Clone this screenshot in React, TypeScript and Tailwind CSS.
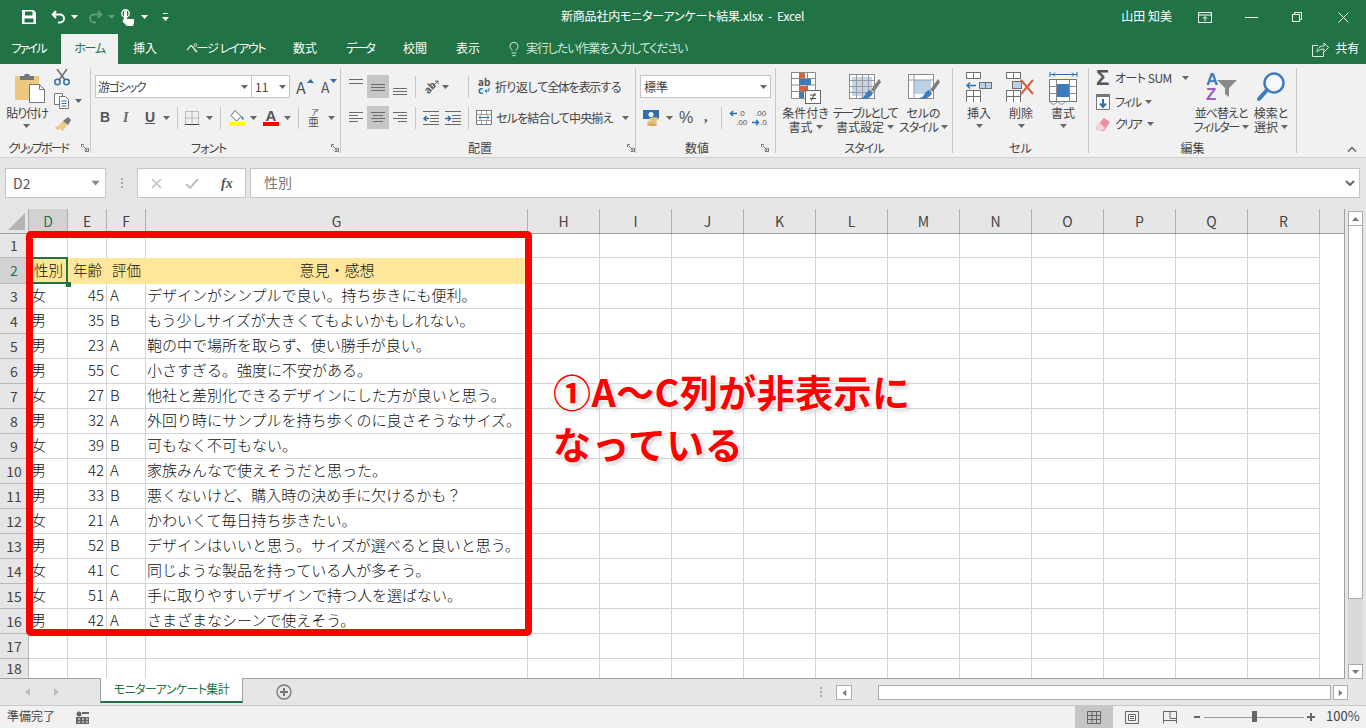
import React from 'react';
import { Lightbulb } from 'lucide-react';

type SheetRow = [string, number, string, string];

const sheetRows: SheetRow[] = [
  ['女', 45, 'A', 'デザインがシンプルで良い。持ち歩きにも便利。'],
  ['男', 35, 'B', 'もう少しサイズが大きくてもよいかもしれない。'],
  ['男', 23, 'A', '鞄の中で場所を取らず、使い勝手が良い。'],
  ['男', 55, 'C', '小さすぎる。強度に不安がある。'],
  ['女', 27, 'B', '他社と差別化できるデザインにした方が良いと思う。'],
  ['男', 32, 'A', '外回り時にサンプルを持ち歩くのに良さそうなサイズ。'],
  ['女', 39, 'B', '可もなく不可もない。'],
  ['男', 42, 'A', '家族みんなで使えそうだと思った。'],
  ['男', 33, 'B', '悪くないけど、購入時の決め手に欠けるかも？'],
  ['女', 21, 'A', 'かわいくて毎日持ち歩きたい。'],
  ['男', 52, 'B', 'デザインはいいと思う。サイズが選べると良いと思う。'],
  ['女', 41, 'C', '同じような製品を持っている人が多そう。'],
  ['女', 51, 'A', '手に取りやすいデザインで持つ人を選ばない。'],
  ['男', 42, 'A', 'さまざまなシーンで使えそう。'],
];

const emptyCols = ['H', 'I', 'J', 'K', 'L', 'M', 'N', 'O', 'P', 'Q', 'R'];
const gridLine = 'border-r border-b border-[#d4d4d4]';

const Caret = ({ className = '', color = '#666' }: { className?: string; color?: string }) => (
  <svg width="7" height="4" viewBox="0 0 7 4" className={`shrink-0 ${className}`}>
    <path d="M0 0h7L3.5 4z" fill={color} />
  </svg>
);

const Launcher = ({ className = '' }: { className?: string }) => (
  <svg width="8" height="8" viewBox="0 0 8 8" className={`shrink-0 ${className}`} fill="none" stroke="#777">
    <path d="M.5 3V.5H3M7.5 4v3.5H4M2 2l4 4M6 3.5V6H3.5" />
  </svg>
);

const Sep = ({ className = '' }: { className?: string }) => (
  <div className={`w-px h-[22px] bg-[#c6c6c6] shrink-0 ${className}`} />
);

// three grey bars used by all six alignment buttons
const AlignIcon = ({ bars }: { bars: [number, number, number][] }) => (
  <svg width="14" height="16" viewBox="0 0 14 16" className="shrink-0">
    {bars.map(([x, y, w], i) => (
      <rect key={i} x={x} y={y} width={w} height="1" fill="#6b6b6b" />
    ))}
  </svg>
);

const Group = ({ width, label, launcher, labelClass = 'justify-center', children }: {
  width: string; label: string; launcher?: string; labelClass?: string; children: React.ReactNode;
}) => (
  <div className={`${width} h-[85px] shrink-0 flex flex-col border-r border-[#c8c8c8]`}>
    <div className="h-[71px] flex flex-col">{children}</div>
    <div className={`h-[14px] flex items-start leading-[18px] ${labelClass}`}>
      <span className="whitespace-nowrap">{label}</span>
      {launcher && <Launcher className={launcher} />}
    </div>
  </div>
);

const BigButton = ({ width, icon, line1, line2, caretOnly, track1 = '', track2 = '' }: {
  width: string; icon: React.ReactNode; line1: string; line2?: string; caretOnly?: boolean; track1?: string; track2?: string;
}) => (
  <div className={`${width} flex flex-col items-center shrink-0`}>
    <div className="mt-[4px] h-[34px] flex items-start justify-center">{icon}</div>
    <div className={`leading-[14px] whitespace-nowrap ${track1}`}>{line1}</div>
    {line2 && (
      <div className="leading-[14px] whitespace-nowrap flex items-center gap-[3px]">
        <span className={track2}>{line2}</span>
        <Caret />
      </div>
    )}
    {caretOnly && <Caret className="mt-[4px]" />}
  </div>
);

const Condition = () => (
  <svg width="30" height="32" viewBox="0 0 30 32">
    <path d="M.5.5h24v26H.5z M.5 6.5h24M.5 13h24M.5 19.5h24M8.500.5v26M16.500.5v26" fill="#fff" stroke="#8a8a8a" />
    <rect x="8" y="1" width="6" height="5" fill="#d9603b" />
    <rect x="8" y="7" width="12" height="6" fill="#3f7cbf" />
    <rect x="8" y="14" width="9" height="5" fill="#d9603b" />
    <rect x="8" y="20" width="5" height="6" fill="#3f7cbf" />
    <rect x="14.500" y="18.500" width="15" height="13" fill="#fff" stroke="#666" />
    <path d="M19 23h6M19 26.500h6M20 29l4-8" stroke="#444" fill="none" />
  </svg>
);

const Brush = () => (
  <g>
    <path d="M30 7l-8 11 3 2 7-10z" fill="#7f7f7f" />
    <path d="M21 18c-3 1-4 3-5 5-1 2-3 3-5 3 4 2 10 1 13-5z" fill="#3f7cbf" />
  </g>
);

const TableStyle = () => (
  <svg width="32" height="32" viewBox="0 0 32 32">
    <rect x=".5" y="2.500" width="25" height="24" fill="#fff" stroke="#8a8a8a" />
    <rect x="3" y="5" width="20" height="19" fill="#c3d5ea" />
    <path d="M1 8.500h24M1 14.500h24M1 20.500h24M7.500 3v23M13.500 3v23M19.500 3v23" stroke="#9a9a9a" fill="none" />
    <Brush />
  </svg>
);

const CellStyle = () => (
  <svg width="32" height="32" viewBox="0 0 32 32">
    <rect x=".5" y="2.500" width="25" height="24" fill="#fff" stroke="#8a8a8a" />
    <rect x="6" y="8" width="17" height="14" fill="#bcd0e8" />
    <path d="M6 3v23M1 8h24" stroke="#9a9a9a" fill="none" />
    <Brush />
  </svg>
);

const MiniGrid = ({ x, y, cols = 2, rows = 1 }: { x: number; y: number; cols?: number; rows?: number }) => (
  <g fill="#fff" stroke="#6f6f6f">
    {Array.from({ length: cols * rows }).map((_, i) => (
      <rect key={i} x={x + (i % cols) * 7} y={y + Math.floor(i / cols) * 6} width="7" height="6" />
    ))}
  </g>
);

const InsertCells = () => (
  <svg width="27" height="30" viewBox="0 0 27 30">
    <MiniGrid x={.5} y={.5} cols={2} />
    <rect x="13.500" y="10.500" width="12" height="6" fill="#bcd0e8" stroke="#6f6f6f" />
    <path d="M19.500 10.500v6" stroke="#6f6f6f" />
    <path d="M1 13.500h9M4 10.500l-3 3 3 3" stroke="#2f6fb0" strokeWidth="1.500" fill="none" />
    <MiniGrid x={.5} y={18.500} cols={2} rows={2} />
  </svg>
);

const DeleteCells = () => (
  <svg width="30" height="30" viewBox="0 0 30 30">
    <MiniGrid x={.5} y={.5} cols={2} />
    <rect x="6.500" y="9.500" width="9" height="7" fill="#bcd0e8" stroke="#6f6f6f" />
    <path d="M15 8l12 14M27 8L15 22" stroke="#d9603b" strokeWidth="2" fill="none" />
    <MiniGrid x={.5} y={18.500} cols={2} rows={2} />
  </svg>
);

const FormatCells = () => (
  <svg width="29" height="34" viewBox="0 0 29 34">
    <path d="M1 2.500h27M1 0v5M28 0v5M4 2.500l2-2M4 2.500l2 2M25 2.500l-2-2M25 2.500l-2 2" stroke="#2f6fb0" fill="none" />
    <rect x=".5" y="7.500" width="27" height="22" fill="#fff" stroke="#777" />
    <path d="M7.500 8v21M20.500 8v21M1 14.500h26M1 21.500h26" stroke="#8a8a8a" />
    <rect x="8" y="12" width="12" height="13" fill="#3f7cbf" />
    <path d="M1 30c2 3 5 3 7 0M9 30c2 3 5 3 7 0" stroke="#8a8a8a" fill="none" />
  </svg>
);

const Magnifier = () => (
  <svg width="30" height="31" viewBox="0 0 30 31">
    <circle cx="18" cy="11" r="9.500" fill="#f7fbff" stroke="#3f7cbf" strokeWidth="2.500" />
    <path d="M11 18L3 27" stroke="#3f7cbf" strokeWidth="4" strokeLinecap="round" />
  </svg>
);

const App = () => {
  return (
    <div className="w-[1366px] h-[728px] relative overflow-hidden flex flex-col bg-[#e6e6e6] text-[12px] text-[#444] [font-family:'Noto_Sans_CJK_JP','Noto_Sans',sans-serif] [font-feature-settings:'palt']">
      {/* title bar */}
      <div className="h-[34px] bg-[#217346] text-white flex items-center shrink-0">
        <div className="w-[561px] shrink-0 flex items-center">
          <svg width="16" height="16" viewBox="0 0 16 16" className="ml-[21px]">
            <path fillRule="evenodd" fill="#fff" d="M1 1h11.500L15 3.500V15H1z M4 2.500v4h7.500v-4z M3.500 9.500v4h9v-4z" />
          </svg>
          <svg width="15" height="14" viewBox="0 0 15 14" className="ml-[14px]" fill="none" stroke="#fff" strokeWidth="2">
            <path d="M5 1L1.800 4.500 5 8M2 4.500h7a4 4 0 0 1 0 8H7" />
          </svg>
          <Caret className="ml-[5px]" color="#fff" />
          <svg width="15" height="14" viewBox="0 0 15 14" className="ml-[10px]" fill="none" stroke="#5f9a7c" strokeWidth="2">
            <path d="M10 1l3.200 3.500L10 8M13 4.500H6a4 4 0 0 0 0 8h2" />
          </svg>
          <Caret className="ml-[5px]" color="#5f9a7c" />
          <svg width="14" height="17" viewBox="0 0 14 17" className="ml-[6px]">
            <circle cx="4.500" cy="4.500" r="3.700" fill="none" stroke="#fff" strokeWidth="1.400" />
            <rect x="3" y="2" width="3" height="9" fill="#fff" />
            <path d="M3 9h3v1h7v4l-1 3H6L1.500 12.500z" fill="#fff" />
          </svg>
          <Caret className="ml-[6px]" color="#fff" />
          <svg width="7" height="8" viewBox="0 0 7 8" className="ml-[14px]">
            <path d="M1 0h5v1H1zM0 4h7L3.500 8z" fill="#fff" />
          </svg>
        </div>
        <span className="whitespace-nowrap pb-[2px] tracking-[-.2px]">新商品社内モニターアンケート結果.xlsx&nbsp;&nbsp;-&nbsp;&nbsp;Excel</span>
        <span className="ml-auto whitespace-nowrap pb-[2px]">山田 知美</span>
        <svg width="14" height="11" viewBox="0 0 14 11" className="ml-[26px]" fill="none" stroke="#fff">
          <path d="M.5.500h13v10H.5zM.5 3h13M7 9V5M5 6.500L7 4.500l2 2" />
        </svg>
        <div className="ml-[33px] w-[13px] h-px bg-white" />
        <svg width="10" height="10" viewBox="0 0 10 10" className="ml-[34px]" fill="none" stroke="#fff">
          <path d="M.5 2.500h7v7h-7zM2.500 2.500v-2h7v7h-2" />
        </svg>
        <svg width="11" height="11" viewBox="0 0 11 11" className="ml-[36px] mr-[17px]" stroke="#fff">
          <path d="M.5.500l10 10M10.500.500l-10 10" />
        </svg>
      </div>

      {/* ribbon tabs */}
      <div className="h-[30px] bg-[#217346] text-white flex items-center shrink-0">
        <div className="w-[61px] text-center pr-[4px] pb-[2px] tracking-[-1.8px]">ファイル</div>
        <div className="w-[57px] h-full bg-[#f1f1f1] text-[#217346] flex items-center justify-center pb-[2px] tracking-[-1.2px]">ホーム</div>
        <div className="w-[54px] text-center pb-[2px]">挿入</div>
        <div className="w-[107px] text-center pb-[2px] tracking-[-1.4px] whitespace-pre">ページ  レイアウト</div>
        <div className="w-[52px] text-center pb-[2px]">数式</div>
        <div className="w-[58px] text-center pb-[2px] tracking-[-2px]">データ</div>
        <div className="w-[52px] text-center pb-[2px]">校閲</div>
        <div className="w-[54px] text-center pb-[2px]">表示</div>
        <Lightbulb size={16} strokeWidth={1.400} className="ml-[11px] text-[#dfeee6]" />
        <span className="ml-[4px] text-[#d5e6dd] whitespace-nowrap pb-[2px] tracking-[-1.1px]">実行したい作業を入力してください</span>
        <svg width="17" height="15" viewBox="0 0 17 15" className="ml-[625px]" fill="none" stroke="#dfeee6">
          <path d="M6 3.500H.5v11h11V10M5 10c0-4 3-6 7-6V1l4.500 4.500L12 10V7c-3 0-5 1-7 3z" />
        </svg>
        <span className="ml-[6px] whitespace-nowrap pb-[2px]">共有</span>
      </div>

      {/* ribbon */}
      <div className="h-[94px] shrink-0 bg-[#f1f1f1] border-b border-[#d0d0d0] pt-[4px] flex">
        <div className="w-[91px] h-[85px] shrink-0 flex flex-col border-r border-[#c8c8c8]">
          <div className="h-[71px] flex">
            <div className="w-[54px] flex flex-col items-center shrink-0 pl-[1px]">
              <svg width="30" height="31" viewBox="0 0 30 31" className="mt-[4px] ml-[4px]">
                <rect x="0" y="4" width="24" height="24" rx="1" fill="#edc87e" />
                <path d="M5 8V4h4c0-3 6-3 6 0h4v4z" fill="#767676" />
                <path d="M14.500 12.500h10l5 5v13h-15z" fill="#fff" stroke="#767676" />
                <path d="M24.500 12.500v5h5" fill="none" stroke="#767676" />
              </svg>
              <div className="mt-[3px] leading-[14px] whitespace-nowrap pr-[1px] tracking-[-1px]">貼り付け</div>
              <Caret className="mt-[4px] mr-[2px]" />
            </div>
            <div className="flex flex-col pt-[1px]">
              <svg width="16" height="17" viewBox="0 0 16 17" fill="none">
                <path d="M3 0l8 11M13 0L5 11" stroke="#6b6b6b" strokeWidth="1.500" />
                <circle cx="3.500" cy="13" r="2.700" stroke="#2f6fb0" strokeWidth="1.500" />
                <circle cx="12.500" cy="13" r="2.700" stroke="#2f6fb0" strokeWidth="1.500" />
              </svg>
              <div className="flex items-center mt-[7px]">
                <svg width="16" height="16" viewBox="0 0 16 16" fill="#fff" stroke="#777">
                  <path d="M.5.500h8v11h-8z" />
                  <path d="M5.500 3.500h6l3 3v9h-9z" />
                  <path d="M7.500 8h5M7.500 10.500h5M7.500 13h5" stroke="#2f6fb0" />
                </svg>
                <Caret className="ml-[5px]" />
              </div>
              <svg width="17" height="15" viewBox="0 0 17 15" className="mt-[8px]">
                <path d="M9 4l4 4-4 6-2-1-1-2-1 2-3-1-1-2c3 0 5-3 8-6z" fill="#edc87e" />
                <path d="M9 4l5-4 3 3-3 5z" fill="#767676" />
              </svg>
            </div>
          </div>
          <div className="h-[14px] flex items-start leading-[18px] pl-[8px]">
            <span className="whitespace-nowrap tracking-[-2px]">クリップボード</span>
            <Launcher className="ml-[13px] mt-[5px]" />
          </div>
        </div>

        <Group width="w-[250px]" label="フォント" launcher="ml-[105px] mt-[5px]" labelClass="pl-[100px] tracking-[-1px]">
          <div className="flex items-center pl-[4px] mt-[7px] h-[23px]">
            <div className="w-[157px] h-[23px] bg-white border border-[#c6c6c6] flex items-center pl-[2px] pr-[3px] shrink-0">
              <span className="whitespace-nowrap tracking-[-1.5px]">游ゴシック</span>
              <Caret className="ml-auto" />
            </div>
            <div className="w-[39px] h-[23px] -ml-px bg-white border border-[#c6c6c6] flex items-center pl-[3px] pr-[3px] shrink-0">
              <span>11</span>
              <Caret className="ml-auto" />
            </div>
            <div className="relative ml-[6px] w-[16px] text-[16px] leading-[20px] text-[#555]">
              A
              <Caret className="absolute -right-[2px] top-[2px] rotate-180" color="#2f6fb0" />
            </div>
            <div className="relative ml-[9px] w-[14px] text-[14px] leading-[20px] text-[#555]">
              A
              <Caret className="absolute -right-[2px] top-[2px]" color="#2f6fb0" />
            </div>
          </div>
          <div className="flex items-center pl-[9px] mt-[8px] h-[23px]">
            <span className="w-[10px] font-bold text-[14px] text-[#555] [font-family:'Liberation_Sans',sans-serif]">B</span>
            <span className="ml-[13px] w-[10px] italic font-bold text-[14px] text-[#666] [font-family:'Liberation_Serif',serif]">I</span>
            <span className="ml-[12px] w-[12px] font-bold text-[14px] text-[#555] underline [font-family:'Liberation_Sans',sans-serif]">U</span>
            <Caret className="ml-[6px]" />
            <Sep className="ml-[7px]" />
            <svg width="14" height="14" viewBox="0 0 14 14" className="ml-[7px]" fill="none" stroke="#888" strokeDasharray="1 1">
              <path d="M.5.500h13v13H.5zM7 .5v13M.5 7h13" />
              <path d="M0 13.500h14" stroke="#444" strokeDasharray="none" />
            </svg>
            <Caret className="ml-[7px]" />
            <Sep className="ml-[7px]" />
            <div className="ml-[8px] w-[16px] flex flex-col items-center">
              <svg width="16" height="12" viewBox="0 0 16 12">
                <path d="M6 .5l6 6-4.500 4.500-5.500-5.500z" fill="#fff" stroke="#666" />
                <path d="M12.500 6c1.500 1 2.500 2.500 2 4-1.500-.5-2.500-2-2-4z" fill="#2f6fb0" />
              </svg>
              <div className="w-[16px] h-[4px] bg-[#ffff00]" />
            </div>
            <Caret className="ml-[5px]" />
            <div className="ml-[6px] w-[16px] flex flex-col items-center">
              <span className="text-[15px] leading-[13px] text-[#555] [font-family:'Liberation_Sans',sans-serif] font-bold">A</span>
              <div className="w-[16px] h-[4px] bg-[#ff0000]" />
            </div>
            <Caret className="ml-[5px]" />
            <Sep className="ml-[7px]" />
            <svg width="12" height="20" viewBox="0 0 12 20" className="ml-[9px] overflow-visible" fill="#555">
              <text x="3" y="7" fontSize="8">ア</text>
              <text x="0" y="18" fontSize="11">亜</text>
            </svg>
            <Caret className="ml-[8px]" />
          </div>
        </Group>

        <Group width="w-[295px]" label="配置" launcher="ml-[135px] mt-[5px]" labelClass="pl-[127px]">
          <div className="flex items-center pl-[8px] mt-[7px] h-[23px]">
            <AlignIcon bars={[[0, 0, 14], [0, 4, 14]]} />
            <div className="ml-[4px] w-[22px] h-[23px] bg-[#c6c6c6] flex items-center justify-center">
              <AlignIcon bars={[[0, 5, 14], [0, 8, 14], [0, 11, 14]]} />
            </div>
            <div className="ml-[4px]"><AlignIcon bars={[[0, 9, 14], [0, 12, 14], [0, 15, 14]]} /></div>
            <Sep className="ml-[8px]" />
            <div className="ml-[7px] w-[16px] h-[16px] relative text-[#555]">
              <span className="block -rotate-45 text-[10px] leading-[14px] font-bold">ab</span>
              <svg width="7" height="7" viewBox="0 0 7 7" className="absolute right-0 top-[1px]" fill="none" stroke="#666">
                <path d="M0 7l6-6M3 1h3v3" />
              </svg>
            </div>
            <Caret className="ml-[3px]" />
            <Sep className="ml-[19px]" />
            <svg width="14" height="17" viewBox="0 0 14 17" className="ml-[9px] overflow-visible" fontSize="10" fontWeight="700">
              <text x="0" y="8" fill="#555">ab</text>
              <text x="0" y="16" fill="#2f6fb0">c</text>
              <path d="M11 10v3H7M9 11.500L7 13l2 1.500" fill="none" stroke="#2f6fb0" />
            </svg>
            <span className="ml-[3px] whitespace-nowrap [font-feature-settings:normal] tracking-[-1.5px]">折り返して全体を表示する</span>
          </div>
          <div className="flex items-center pl-[8px] mt-[8px] h-[23px]">
            <AlignIcon bars={[[0, 2, 14], [0, 5, 9], [0, 8, 14], [0, 11, 9]]} />
            <div className="ml-[4px] w-[22px] h-[23px] bg-[#c6c6c6] flex items-center justify-center">
              <AlignIcon bars={[[0, 2, 14], [2, 5, 10], [0, 8, 14], [2, 11, 10]]} />
            </div>
            <div className="ml-[4px]"><AlignIcon bars={[[0, 2, 14], [5, 5, 9], [0, 8, 14], [5, 11, 9]]} /></div>
            <Sep className="ml-[8px]" />
            <svg width="16" height="14" viewBox="0 0 16 14" className="ml-[7px]" fill="none">
              <path d="M0 .5h16M7 4.500h9M7 7.500h9M7 10.500h9M0 13.500h16" stroke="#6b6b6b" />
              <path d="M1 7.500h5M3.500 5L1 7.500 3.500 10" stroke="#2f6fb0" strokeWidth="1.500" />
            </svg>
            <svg width="16" height="14" viewBox="0 0 16 14" className="ml-[6px]" fill="none">
              <path d="M0 .5h16M7 4.500h9M7 7.500h9M7 10.500h9M0 13.500h16" stroke="#6b6b6b" />
              <path d="M0 7.500h5M3 5l2.500 2.500L3 10" stroke="#2f6fb0" strokeWidth="1.500" />
            </svg>
            <Sep className="ml-[7px]" />
            <svg width="16" height="15" viewBox="0 0 16 15" className="ml-[7px]" fill="#fff">
              <path d="M.5.500h15v14H.5z" stroke="#777" />
              <path d="M.5 4.500h15M.5 10.500h15M5.500.5v4M10.500.5v4M5.500 10.500v4M10.500 10.500v4" stroke="#999" />
              <path d="M3 7.500h10M5 5.500l-2 2 2 2M11 5.500l2 2-2 2" stroke="#2f6fb0" fill="none" />
            </svg>
            <span className="ml-[4px] whitespace-nowrap tracking-[-.8px]">セルを結合して中央揃え</span>
            <Caret className="ml-[9px]" />
          </div>
        </Group>

        <Group width="w-[140px]" label="数値" launcher="ml-[52px] mt-[5px]" labelClass="pl-[49px]">
          <div className="mt-[7px] ml-[4px] w-[131px] h-[23px] bg-white border border-[#c6c6c6] flex items-center pl-[3px] pr-[3px] shrink-0">
            <span>標準</span>
            <Caret className="ml-auto" />
          </div>
          <div className="flex items-center pl-[7px] mt-[8px] h-[23px]">
            <svg width="17" height="16" viewBox="0 0 17 16">
              <rect x="0" y="0" width="16" height="9" fill="#2f6fb0" />
              <circle cx="8" cy="4.500" r="2.500" fill="#fff" />
              <ellipse cx="11" cy="9" rx="5" ry="1.800" fill="#e8c178" />
              <ellipse cx="9" cy="12" rx="5" ry="1.800" fill="#e8c178" />
              <ellipse cx="9" cy="14.500" rx="5" ry="1.500" fill="#d9ab5b" />
            </svg>
            <Caret className="ml-[6px]" />
            <span className="ml-[6px] w-[14px] text-[16px] leading-[20px] text-[#555] [font-family:'Liberation_Sans',sans-serif]">%</span>
            <span className="ml-[11px] w-[6px] text-[14px] leading-[14px] font-bold text-[#555] -mt-[2px] [font-family:'Liberation_Serif',serif]">,</span>
            <Sep className="ml-[11px]" />
            <svg width="20" height="18" viewBox="0 0 20 18" className="ml-[7px]" fontSize="8" fill="#555" fontFamily="Liberation Sans">
              <path d="M8 4.500H1M4 2L1.500 4.500 4 7" fill="none" stroke="#2f6fb0" strokeWidth="1.500" />
              <text x="9" y="7">.0</text>
              <text x="7" y="16">.00</text>
            </svg>
            <svg width="16" height="18" viewBox="0 0 16 18" className="ml-[3px]" fontSize="8" fill="#555" fontFamily="Liberation Sans">
              <text x="3" y="7">.00</text>
              <path d="M0 13.500h7M4 11l2.500 2.500L4 16" fill="none" stroke="#2f6fb0" strokeWidth="1.500" />
              <text x="8" y="16">.0</text>
            </svg>
          </div>
        </Group>

        <Group width="w-[177px]" label="スタイル" labelClass="justify-center tracking-[-1px]">
          <div className="flex">
            <BigButton width="w-[59px]" icon={<Condition />} line1="条件付き" line2="書式" />
            <BigButton width="w-[60px]" icon={<TableStyle />} line1="テーブルとして" line2="書式設定" track1="tracking-[-1.5px]" />
            <BigButton width="w-[57px]" icon={<CellStyle />} line1="セルの" line2="スタイル" track2="tracking-[-1px]" />
          </div>
        </Group>

        <Group width="w-[136px]" label="セル">
          <div className="flex pl-[5px]">
            <BigButton width="w-[42px]" icon={<InsertCells />} line1="挿入" caretOnly />
            <BigButton width="w-[42px]" icon={<DeleteCells />} line1="削除" caretOnly />
            <BigButton width="w-[42px]" icon={<FormatCells />} line1="書式" caretOnly />
          </div>
        </Group>

        <Group width="w-[208px]" label="編集">
          <div className="flex">
            <div className="w-[107px] shrink-0 flex flex-col pl-[7px]">
              <div className="h-[20px] flex items-center">
                <span className="w-[17px] text-[22px] leading-[20px] font-bold text-[#555] [font-family:'Liberation_Sans',sans-serif]">Σ</span>
                <span className="ml-[2px] whitespace-nowrap tracking-[-.5px]">オート SUM</span>
                <Caret className="ml-[10px]" />
              </div>
              <div className="h-[20px] mt-[4px] flex items-center">
                <svg width="15" height="16" viewBox="0 0 15 16" fill="#fff">
                  <path d="M.5 2.500h13v13H.5z" stroke="#777" />
                  <rect x="0" y="0" width="14" height="3" fill="#777" />
                  <path d="M7 5v8M4 9.500L7 13l3-3.500" stroke="#2f6fb0" strokeWidth="2" fill="none" />
                </svg>
                <span className="ml-[4px] whitespace-nowrap tracking-[-1.6px]">フィル</span>
                <Caret className="ml-[5px]" />
              </div>
              <div className="h-[20px] mt-[2px] flex items-center">
                <svg width="14" height="13" viewBox="0 0 14 13">
                  <path d="M8 0l6 4-6 9-7-1-1-3z" fill="#ec8ea0" />
                  <path d="M0 9l4-4 5 5-2 2H2z" fill="#f7d4da" />
                </svg>
                <span className="ml-[5px] whitespace-nowrap tracking-[-2px]">クリア</span>
                <Caret className="ml-[6px]" />
              </div>
            </div>
            <BigButton
              width="w-[50px]"
              icon={
                <svg width="31" height="30" viewBox="0 0 31 30" fontFamily="Liberation Sans" fontWeight="700" fontSize="17">
                  <text x="0" y="13" fill="#3f7cbf">A</text>
                  <text x="0" y="28" fill="#9b5fc0">Z</text>
                  <path d="M11 8h20l-8 8v9l-4-3v-6z" fill="#8a8a8a" />
                </svg>
              }
              line1="並べ替えと"
              line2="フィルター"
              track1="tracking-[-1px]"
              track2="tracking-[-1.500px]"
            />
            <BigButton width="w-[50px]" icon={<Magnifier />} line1="検索と" line2="選択" />
          </div>
        </Group>

        <svg width="10" height="6" viewBox="0 0 10 6" className="ml-[50px] mt-[78px]" fill="none" stroke="#666" strokeWidth="1.500">
          <path d="M1 5.500l4-4 4 4" />
        </svg>
      </div>

      {/* formula bar */}
      <div className="h-[30px] mt-[10px] mb-[11px] shrink-0 flex text-[#777] [font-feature-settings:normal]">
        <div className="ml-[5px] w-[101px] bg-white border border-[#c6c6c6] flex items-center pl-[7px] pr-[6px] text-[14px] text-[#555]">
          D2
          <Caret className="ml-auto scale-125" color="#888" />
        </div>
        <svg width="3" height="11" viewBox="0 0 3 11" className="ml-[15px] my-auto" fill="#aaa">
          <rect width="2" height="2" />
          <rect y="4" width="2" height="2" />
          <rect y="8" width="2" height="2" />
        </svg>
        <div className="ml-[13px] w-[109px] bg-white border border-[#c6c6c6] flex items-center">
          <svg width="11" height="11" viewBox="0 0 11 11" className="ml-[13px]" stroke="#c0c0c0" strokeWidth="1.500">
            <path d="M1 1l9 9M10 1l-9 9" />
          </svg>
          <svg width="14" height="11" viewBox="0 0 14 11" className="ml-[23px]" stroke="#c0c0c0" strokeWidth="2" fill="none">
            <path d="M1 6l4 4 8-9" />
          </svg>
          <span className="ml-[22px] italic font-bold text-[14px] text-[#555] [font-family:'Liberation_Serif',serif]">fx</span>
        </div>
        <div className="ml-[4px] w-[1110px] bg-white border border-[#c6c6c6] flex items-center pl-[13px] pr-[4px] text-[14px]">
          <span className="pb-[2px]">性別</span>
          <svg width="10" height="6" viewBox="0 0 10 6" className="ml-auto" fill="none" stroke="#666" strokeWidth="2">
            <path d="M1 1l4 4 4-4" />
          </svg>
        </div>
      </div>

      {/* sheet + vertical scrollbar */}
      <div className="flex h-[470px] shrink-0 [font-feature-settings:normal]">
        <div className="w-[1345px] h-[470px] shrink-0 flex flex-col border-r border-b border-[#9f9f9f] text-[15px] font-light text-[#111] overflow-hidden">
          {/* column headers */}
          <div className="h-[25px] shrink-0 flex text-[14px] font-normal text-[#444] border-b border-[#9f9f9f]">
            <div className="w-[29px] shrink-0 border-r border-[#b0b0b0] flex items-end justify-end pr-[3px] pb-[3px]">
              <svg width="17" height="17" viewBox="0 0 17 17"><path d="M17 0v17H0z" fill="#b4b4b4" /></svg>
            </div>
            <div className="w-[39px] shrink-0 bg-[#d2d2d2] text-[#217346] border-r border-[#b0b0b0] flex items-center justify-center">D</div>
            <div className="w-[39px] shrink-0 border-r border-[#b0b0b0] flex items-center justify-center">E</div>
            <div className="w-[39px] shrink-0 border-r border-[#b0b0b0] flex items-center justify-center">F</div>
            <div className="w-[382px] shrink-0 border-r border-[#b0b0b0] flex items-center justify-center">G</div>
            {emptyCols.map(c => (
              <div key={c} className="w-[72px] shrink-0 border-r border-[#b0b0b0] flex items-center justify-center">{c}</div>
            ))}
          </div>

          {/* row 1 */}
          <div className="h-[24px] shrink-0 flex bg-white">
            <div className="w-[29px] shrink-0 bg-[#e6e6e6] border-r border-b border-[#b8b8b8] flex items-center justify-center text-[14px] font-normal text-[#444]">1</div>
            <div className="w-[39px] shrink-0 border-r border-[#d4d4d4]" />
            <div className="w-[39px] shrink-0 border-r border-[#d4d4d4]" />
            <div className="w-[39px] shrink-0 border-r border-[#d4d4d4]" />
            <div className="w-[382px] shrink-0 border-r border-[#d4d4d4]" />
            {emptyCols.map(c => <div key={c} className={`w-[72px] shrink-0 ${gridLine}`} />)}
          </div>

          {/* row 2: heading row, D2 is the active cell */}
          <div className="h-[26px] shrink-0 flex bg-white">
            <div className="w-[29px] shrink-0 bg-[#d2d2d2] text-[#217346] font-normal border-r border-b border-[#b8b8b8] flex items-center justify-center text-[14px]">2</div>
            <div className="w-[39px] shrink-0 bg-[#ffe699] flex items-center justify-center relative whitespace-nowrap pb-[2px] text-[14.500px]">
              性別
              <div className="absolute -left-px -top-px w-[40px] h-[27px] border-2 border-[#217346]" />
              <div className="absolute -right-[3px] -bottom-[3px] w-[5px] h-[5px] bg-[#217346] z-10" />
            </div>
            <div className="w-[39px] shrink-0 bg-[#ffe699] flex items-center justify-center whitespace-nowrap pb-[2px] text-[14.500px]">年齢</div>
            <div className="w-[39px] shrink-0 bg-[#ffe699] flex items-center justify-center whitespace-nowrap pb-[2px] text-[14.500px]">評価</div>
            <div className="w-[382px] shrink-0 bg-[#ffe699] flex items-center justify-center pb-[2px]">意見・感想</div>
            {emptyCols.map(c => <div key={c} className={`w-[72px] shrink-0 ${gridLine}`} />)}
          </div>

          {sheetRows.map(([sex, age, grade, comment], i) => (
            <div key={i} className="h-[25px] shrink-0 flex bg-white">
              <div className="w-[29px] shrink-0 bg-[#e6e6e6] border-r border-b border-[#b8b8b8] flex items-center justify-center text-[14px] font-normal text-[#444]">{i + 3}</div>
              <div className={`w-[39px] shrink-0 flex items-center pl-[2px] pb-[2px] ${gridLine}`}>{sex}</div>
              <div className={`w-[39px] shrink-0 flex items-center justify-end pr-[2px] pb-[2px] ${gridLine}`}>{age}</div>
              <div className={`w-[39px] shrink-0 flex items-center pl-[3px] pb-[2px] ${gridLine}`}>{grade}</div>
              <div className={`w-[382px] shrink-0 flex items-center pl-[1px] pb-[2px] whitespace-nowrap ${gridLine}`}>{comment}</div>
              {emptyCols.map(c => <div key={c} className={`w-[72px] shrink-0 ${gridLine}`} />)}
            </div>
          ))}

          {/* rows 17 and 18 are empty, 18 is cut off by the tab bar */}
          <div className="h-[25px] shrink-0 flex bg-white">
            <div className="w-[29px] shrink-0 bg-[#e6e6e6] border-r border-b border-[#b8b8b8] flex items-center justify-center text-[14px] font-normal text-[#444]">17</div>
            <div className={`w-[39px] shrink-0 ${gridLine}`} />
            <div className={`w-[39px] shrink-0 ${gridLine}`} />
            <div className={`w-[39px] shrink-0 ${gridLine}`} />
            <div className={`w-[382px] shrink-0 ${gridLine}`} />
            {emptyCols.map(c => <div key={c} className={`w-[72px] shrink-0 ${gridLine}`} />)}
          </div>
          <div className="h-[19px] shrink-0 flex bg-white">
            <div className="w-[29px] shrink-0 bg-[#e6e6e6] border-r border-[#b8b8b8] flex items-center justify-center text-[14px] font-normal text-[#444] overflow-hidden">18</div>
            <div className="w-[39px] shrink-0 border-r border-[#d4d4d4]" />
            <div className="w-[39px] shrink-0 border-r border-[#d4d4d4]" />
            <div className="w-[39px] shrink-0 border-r border-[#d4d4d4]" />
            <div className="w-[382px] shrink-0 border-r border-[#d4d4d4]" />
            {emptyCols.map(c => <div key={c} className="w-[72px] shrink-0 border-r border-[#d4d4d4]" />)}
          </div>
        </div>

        <div className="w-[21px] shrink-0 flex flex-col pl-[3px] pt-[2px]">
          <div className="w-[15px] h-[15px] bg-white border border-[#ababab] flex items-center justify-center">
            <Caret className="rotate-180" color="#777" />
          </div>
          <div className="w-[15px] h-[373px] bg-white border border-t-0 border-[#ababab]" />
          <div className="w-[15px] h-[65px] bg-[#dadada]" />
          <div className="w-[15px] h-[15px] bg-white border border-[#ababab] flex items-center justify-center">
            <Caret color="#777" />
          </div>
        </div>
      </div>

      {/* sheet tabs + horizontal scrollbar */}
      <div className="h-[26px] shrink-0 flex items-start">
        <svg width="6" height="8" viewBox="0 0 6 8" className="ml-[25px] mt-[9px]"><path d="M5 0v8L0 4z" fill="#bdbdbd" /></svg>
        <svg width="6" height="8" viewBox="0 0 6 8" className="ml-[23px] mt-[9px]"><path d="M0 0v8l5-4z" fill="#bdbdbd" /></svg>
        <div className="ml-[40px] -mt-px w-[143px] h-[25px] bg-white border-x border-[#9f9f9f] border-b-2 border-b-[#217346] text-[#217346] flex items-center justify-center whitespace-nowrap pb-[2px] tracking-[-.6px]">
          モニターアンケート集計
        </div>
        <svg width="16" height="16" viewBox="0 0 16 16" className="ml-[33px] mt-[5px]" fill="none" stroke="#777">
          <circle cx="8" cy="8" r="7" strokeWidth="1.300" />
          <path d="M8 4v8M4 8h8" strokeWidth="2" />
        </svg>
        <svg width="3" height="11" viewBox="0 0 3 11" className="ml-[528px] mt-[8px]" fill="#aaa">
          <rect width="2" height="2" />
          <rect y="4" width="2" height="2" />
          <rect y="8" width="2" height="2" />
        </svg>
        <div className="ml-[13px] mt-[6px] w-[16px] h-[15px] bg-white border border-[#ababab] flex items-center justify-center">
          <Caret className="rotate-90" color="#777" />
        </div>
        <div className="ml-[26px] mt-[6px] w-[453px] h-[15px] bg-white border border-[#ababab]" />
        <div className="ml-[2px] mt-[6px] w-[15px] h-[15px] bg-white border border-[#ababab] flex items-center justify-center">
          <Caret className="-rotate-90" color="#777" />
        </div>
      </div>

      {/* status bar */}
      <div className="h-[23px] shrink-0 bg-[#f1f1f1] border-t border-[#c8c8c8] flex items-center [font-feature-settings:normal]">
        <span className="ml-[7px] whitespace-nowrap pb-[2px]">準備完了</span>
        <svg width="13" height="13" viewBox="0 0 13 13" className="ml-[21px]">
          <circle cx="3" cy="3" r="2.500" fill="#666" />
          <path d="M6 1h7v2H6zM0 6h13v7H0z" fill="#666" />
          <path d="M2 8h2M6 8h2M10 8h2M2 11h2M6 11h2M10 11h2" stroke="#f1f1f1" />
        </svg>
        <div className="ml-[986px] w-[38px] h-full bg-[#c6c6c6] flex items-center justify-center">
          <svg width="14" height="13" viewBox="0 0 14 13" fill="none" stroke="#666">
            <path d="M.5.500h13v12H.5zM.5 4.500h13M.5 8.500h13M5 .5v12M9.500.5v12" />
          </svg>
        </div>
        <svg width="14" height="13" viewBox="0 0 14 13" className="ml-[12px]" fill="none" stroke="#666">
          <path d="M.5.500h13v12H.5zM3.500 3.500h7v6h-7zM5 5.500h4M5 7.500h4" />
        </svg>
        <svg width="14" height="13" viewBox="0 0 14 13" className="ml-[24px]" fill="none" stroke="#666">
          <path d="M.5 12.500V.5h13v12M7 .5v7M7 7.500h6.500M.5 9.500h13" />
        </svg>
        <div className="ml-[17px] w-[6px] h-[2px] bg-[#666]" />
        <div className="ml-[4px] w-[100px] h-px bg-[#999] relative">
          <div className="absolute left-[48px] -top-[6px] w-[5px] h-[11px] bg-[#666]" />
        </div>
        <svg width="8" height="8" viewBox="0 0 8 8" className="ml-[3px]" stroke="#666" strokeWidth="2">
          <path d="M4 0v8M0 4h8" />
        </svg>
        <span className="ml-[11px] text-[13px] whitespace-nowrap pb-[2px]">100%</span>
      </div>

      {/* annotation drawn over the sheet */}
      <div className="absolute left-[26px] top-[231px] w-[506px] h-[405px] border-[7px] border-[#ff0000] rounded-[5px] pointer-events-none" />
      <div className="absolute left-[553px] top-[365px] text-[38px] leading-[52px] font-bold text-[#ff0000] whitespace-nowrap tracking-[.4px] [font-feature-settings:normal] [text-shadow:0_0_3px_#fff,0_0_3px_#fff,0_0_4px_#fff,2px_2px_4px_#bbb]">
        <div>①A～C列が非表示に</div>
        <div>なっている</div>
      </div>
    </div>
  );
};

export default App;
